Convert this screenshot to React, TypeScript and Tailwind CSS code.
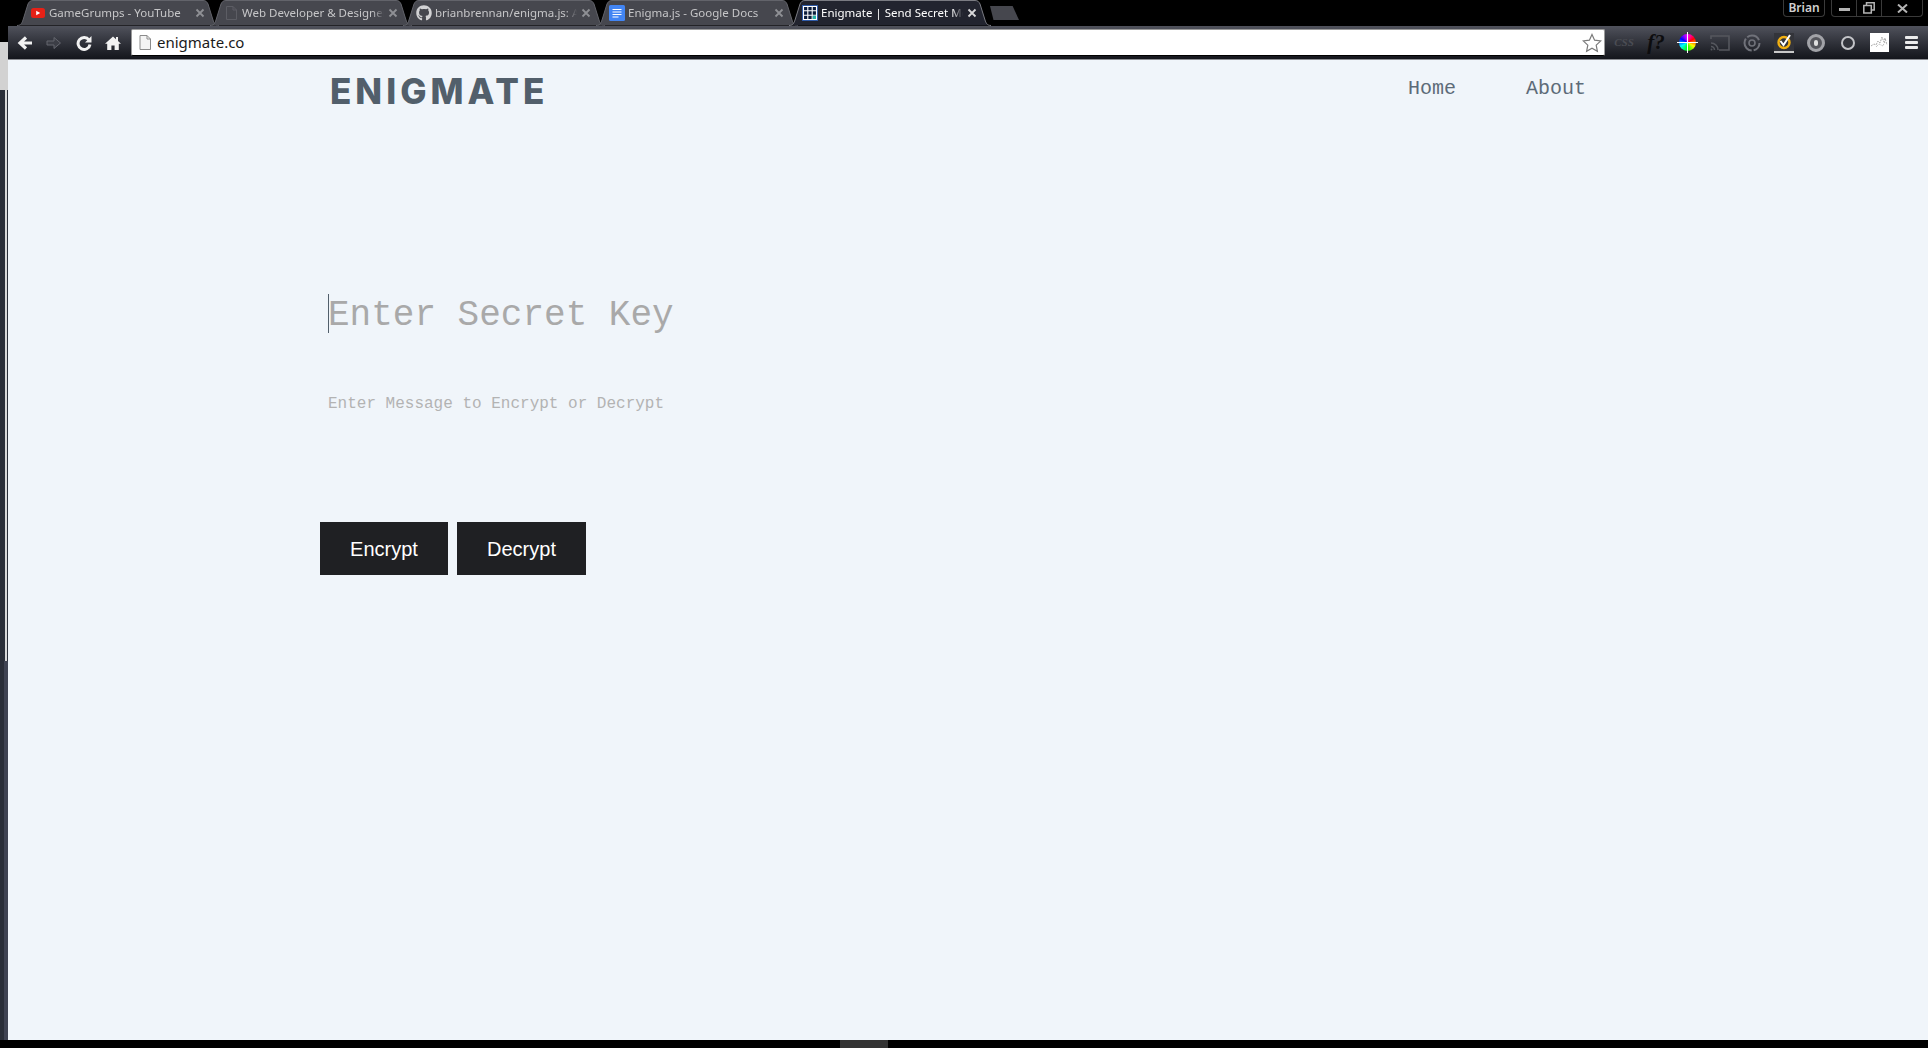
import { FaGithub } from "react-icons/fa";

const tabs = [
  { title: "GameGrumps - YouTube", icon: "youtube" },
  { title: "Web Developer & Designer", icon: "page" },
  { title: "brianbrennan/enigma.js: A", icon: "github" },
  { title: "Enigma.js - Google Docs", icon: "docs" },
  { title: "Enigmate | Send Secret Messages", icon: "grid", active: true },
];

function TabIcon({ name }: { name: string }) {
  if (name === "youtube") {
    return (
      <svg width="16" height="16" viewBox="0 0 16 16">
        <rect x="1" y="3" width="14" height="10" rx="2.5" fill="#e62117" />
        <path d="M6.2 5.8 L10.2 8 L6.2 10.2 Z" fill="#fff" />
      </svg>
    );
  }
  if (name === "page") {
    return (
      <svg width="16" height="16" viewBox="0 0 16 16" fill="none" stroke="#5c5d64">
        <path d="M3.5 1.5 H10 L13.5 5 V14.5 H3.5 Z M10 1.5 V5 H13.5" />
      </svg>
    );
  }
  if (name === "github") return <FaGithub className="text-[#d2d2d4] text-[16px]" />;
  if (name === "docs") {
    return (
      <svg width="16" height="16" viewBox="0 0 16 16">
        <rect width="16" height="16" rx="1.5" fill="#4285f4" />
        <path d="M3.5 4.5 H12.5 M3.5 7 H12.5 M3.5 9.5 H12.5 M3.5 12 H9.5" stroke="#fff" strokeWidth="1.2" />
      </svg>
    );
  }
  return (
    <svg width="16" height="16" viewBox="0 0 16 16">
      <rect width="16" height="16" fill="#2f5aa8" />
      <path d="M1.5 1.5 H14.5 V14.5 H1.5 Z M5.8 1.5 V14.5 M10.2 1.5 V14.5 M1.5 5.8 H14.5 M1.5 10.2 H14.5" fill="#0b1b3a" stroke="#fff" strokeWidth="1.1" />
      <rect x="10.8" y="10.8" width="3.2" height="3.2" fill="#22b3a6" />
    </svg>
  );
}

function Tab({ title, icon, active }: { title: string; icon: string; active?: boolean }) {
  return (
    <div className="relative w-[202px] h-[26px] -mr-[9px] shrink-0 flex items-center pl-[13px]">
      <svg className="absolute inset-0" width="202" height="26" viewBox="0 0 202 26">
        <path
          d="M0 25.5 C4 25.5 5 23 6 20 L11 4 C12 2 13 0.5 16 0.5 L186 0.5 C189 0.5 190 2 191 4 L196 20 C197 23 198 25.5 202 25.5"
          fill={active ? "#22242f" : "#46474e"}
          stroke={active ? "#7a7b82" : "#62636a"}
        />
      </svg>
      <div className="relative w-[16px] h-[16px] flex items-center justify-center">
        <TabIcon name={icon} />
      </div>
      <span
        className={`relative ml-[3px] w-[142px] overflow-hidden whitespace-nowrap text-[11.5px] font-['Noto_Sans',sans-serif] [mask-image:linear-gradient(to_right,#000_92%,transparent)] ${
          active ? "text-white" : "text-[#c6c6c8]"
        }`}
      >
        {title}
      </span>
      <svg className="relative ml-[4px]" width="10" height="10" viewBox="0 0 10 10">
        <path d="M1.5 1.5 L8.5 8.5 M8.5 1.5 L1.5 8.5" stroke={active ? "#d8d8da" : "#8f9095"} strokeWidth="1.8" />
      </svg>
    </div>
  );
}

function WindowControls() {
  return (
    <div className="ml-auto flex items-start gap-[6px] pr-[5px] self-start">
      <div className="w-[42px] h-[17px] border border-t-0 border-[#3a3a3a] rounded-b-[4px] flex items-center justify-center text-[12px] font-semibold text-[#d0d0d0] font-['Noto_Sans',sans-serif]">
        Brian
      </div>
      <div className="w-[92px] h-[17px] border border-t-0 border-[#3a3a3a] rounded-b-[4px] flex">
        <div className="w-[25px] flex items-center justify-center border-r border-[#3a3a3a]">
          <div className="w-[11px] h-[3px] bg-[#b4b4b4] mt-[2px]" />
        </div>
        <div className="w-[25px] flex items-center justify-center border-r border-[#3a3a3a]">
          <svg width="12" height="12" viewBox="0 0 12 12" fill="none" stroke="#b4b4b4" strokeWidth="1.5">
            <path d="M3.5 3 V0.8 H11.2 V8 H8.5" />
            <rect x="0.8" y="3.5" width="7.5" height="7.5" />
          </svg>
        </div>
        <div className="flex-1 flex items-center justify-center">
          <svg width="11" height="9" viewBox="0 0 11 9">
            <path d="M1 0.5 L10 8.5 M10 0.5 L1 8.5" stroke="#b4b4b4" strokeWidth="2" />
          </svg>
        </div>
      </div>
    </div>
  );
}

function NavIcons() {
  return (
    <div className="flex items-center gap-[11px] pl-[8px]">
      <svg width="18" height="18" viewBox="0 0 18 18">
        <path d="M16 9 H5.5 M10 3.5 L4 9 L10 14.5" fill="none" stroke="#f2f2f2" strokeWidth="3.2" />
      </svg>
      <svg width="18" height="18" viewBox="0 0 18 18">
        <path d="M2 7 H9 V3.5 L15.5 9 L9 14.5 V11 H2 Z" fill="#3c3e46" stroke="#65676f" strokeWidth="1" />
      </svg>
      <svg className="ml-[2px]" width="16" height="16" viewBox="0 0 16 16" fill="none">
        <path d="M13 5 A6 6 0 1 0 14 9.5" stroke="#f2f2f2" strokeWidth="3" />
        <path d="M15.5 1 V7.5 H9 Z" fill="#f2f2f2" />
      </svg>
      <svg className="ml-[2px]" width="16" height="16" viewBox="0 0 16 16">
        <path d="M8 1.5 L11 4.2 V2 H13 V6 L16 8.7 H13.8 V15 H9.6 V10.5 H6.4 V15 H2.2 V8.7 H0 Z" fill="#f2f2f2" />
      </svg>
    </div>
  );
}

function ExtensionIcons() {
  return (
    <div className="flex items-center h-full text-[0px] shrink-0">
      <span className="w-[32px] ml-[3px] text-center text-[11px] font-bold italic text-[#4b4d54] font-['Liberation_Serif',serif]">CSS</span>
      <span className="w-[32px] text-center text-[21px] italic font-bold text-[#0c0c0e] font-['Liberation_Serif',serif]">f?</span>
      <div className="w-[31px] flex justify-center">
        <div className="relative w-[17px] h-[17px] rounded-full bg-[conic-gradient(#f0f,#f00,#ff0,#0f0,#0ff,#00f,#f0f)]">
          <div className="absolute left-[8px] -top-[2px] w-[1px] h-[21px] bg-white" />
          <div className="absolute top-[8px] -left-[2px] h-[1px] w-[21px] bg-white" />
        </div>
      </div>
      <div className="w-[33px] flex justify-center">
        <svg width="20" height="16" viewBox="0 0 20 16" fill="none" stroke="#55575e" strokeWidth="1.6">
          <path d="M1 4 V1 H19 V15 H9" />
          <path d="M1 8 A7 7 0 0 1 8 15 M1 11.5 A3.5 3.5 0 0 1 4.5 15" />
          <circle cx="1.5" cy="14.5" r="1" fill="#55575e" stroke="none" />
        </svg>
      </div>
      <div className="w-[32px] flex justify-center">
        <svg width="18" height="20" viewBox="0 0 18 20" fill="none" stroke="#70727a" strokeWidth="2">
          <circle cx="9" cy="10" r="7.5" strokeDasharray="10 2 16 2 14 3" />
          <circle cx="9" cy="10" r="3" strokeWidth="1.6" />
        </svg>
      </div>
      <div className="w-[31px] flex justify-center">
        <svg width="20" height="20" viewBox="0 0 20 20">
          <rect width="20" height="18" fill="#33343a" />
          <rect y="18" width="20" height="2" fill="#c9c9c9" />
          <circle cx="10" cy="9.5" r="5.5" fill="none" stroke="#f2b011" strokeWidth="2.4" />
          <path d="M6.5 8 L9.5 12 L16 2" fill="none" stroke="#fff" strokeWidth="2" />
        </svg>
      </div>
      <div className="w-[33px] flex justify-center">
        <div className="w-[18px] h-[18px] rounded-full border-[3px] border-[#a2a3a8] bg-[#55565c] flex items-center justify-center">
          <div className="w-[4px] h-[6px] rounded-full bg-[#e0e0e0]" />
        </div>
      </div>
      <div className="w-[31px] flex justify-center">
        <div className="w-[14px] h-[14px] rounded-full border-[2px] border-[#c3c4c8] bg-[#33353c]" />
      </div>
      <div className="w-[32px] flex justify-center">
        <svg className="bg-white" width="19" height="19" viewBox="0 0 19 19" fill="none" stroke="#a8a8a8">
          <path d="M1 13 L4 11 L6 12 L8 8 L10 10 L12 4 L14 9 L15 5 L17 12" strokeDasharray="2 1" />
          <path d="M6 14 L9 11 L13 13 L15 8" strokeDasharray="1 1" />
        </svg>
      </div>
      <div className="w-[32px] flex flex-col items-center gap-[2px]">
        <div className="w-[13px] h-[3px] bg-[#ececec] rounded-[1px]" />
        <div className="w-[13px] h-[3px] bg-[#ececec] rounded-[1px]" />
        <div className="w-[13px] h-[3px] bg-[#ececec] rounded-[1px]" />
      </div>
    </div>
  );
}

function BrowserChrome() {
  return (
    <div className="shrink-0">
      <div className="h-[26px] bg-black flex pl-[9px]">
        {tabs.map((t) => (
          <Tab key={t.title} title={t.title} icon={t.icon} active={t.active} />
        ))}
        <div className="ml-[8px] mt-[6px] w-[29px] h-[14px] bg-[#46474e] [clip-path:polygon(0_0,78%_0,100%_100%,12%_100%)]" />
        <WindowControls />
      </div>
      <div className="h-[34px] flex items-center bg-gradient-to-b from-[#50525c] to-[#14161c] border-b border-[#8b8d92]">
        <NavIcons />
        <div className="ml-[10px] w-[1474px] shrink-0 h-[27px] bg-white rounded-[2px] border border-[#9a9a9a] border-b-black flex items-center pl-[7px] pr-[2px]">
          <svg width="12" height="15" viewBox="0 0 12 15" fill="#f4f4f4" stroke="#8b8b8b">
            <path d="M1 0.5 H8 L11.5 4 V14.5 H1 Z M8 0.5 V4 H11.5" />
          </svg>
          <span className="ml-[6px] text-[15px] text-[#1a1a1a] font-['Noto_Sans',sans-serif]">enigmate.co</span>
          <svg className="ml-auto" width="20" height="20" viewBox="0 0 20 20" fill="none" stroke="#7a7a7a" strokeWidth="1.2">
            <path d="M10 1.5 L12.6 7.2 L18.8 7.9 L14.2 12.1 L15.4 18.3 L10 15.2 L4.6 18.3 L5.8 12.1 L1.2 7.9 L7.4 7.2 Z" />
          </svg>
        </div>
        <ExtensionIcons />
      </div>
    </div>
  );
}

function LeftStrip() {
  return (
    <div className="w-[8px] shrink-0 flex flex-col bg-black">
      <div className="h-[42px]" />
      <div className="h-[48px] bg-[#d2d2d2]" />
      <div className="h-[571px] bg-[#2a2e38] flex">
        <div className="w-[5px]" />
        <div className="w-[2px] bg-[#d8d8d8]" />
      </div>
      <div className="flex-1 flex">
        <div className="w-[4px] bg-[#2a2e38]" />
        <div className="flex-1 bg-[#3f4352]" />
      </div>
    </div>
  );
}

export default function App() {
  return (
    <div className="w-[1928px] h-[1048px] overflow-hidden flex flex-col bg-black">
      <div className="flex-1 flex min-h-0">
        <LeftStrip />
        <div className="flex-1 flex flex-col min-w-0">
          <BrowserChrome />
          <main className="flex-1 bg-[#f0f5fa] pl-[312px] pr-[342px]">
            <header className="flex justify-between pl-[10px] pt-[8px]">
              <a className="text-[35px] leading-[46px] font-extrabold tracking-[4px] text-[#525f6b] font-['Inter',sans-serif]">ENIGMATE</a>
              <nav className="flex gap-[70px] pt-[9px] text-[20px] leading-[24px] text-[#5d6b78] font-['Liberation_Mono',monospace]">
                <a>Home</a>
                <a>About</a>
              </nav>
            </header>
            <div className="relative mt-[182px] ml-[8px]">
              <span className="absolute left-0 -top-[2px] w-[1px] h-[39px] bg-[#525f6b]" />
              <input
                className="w-[800px] h-[40px] bg-transparent outline-none text-[36px] font-['Liberation_Mono',monospace] placeholder:text-[#a9a9a9]"
                placeholder="Enter Secret Key"
              />
            </div>
            <textarea
              className="block mt-[56px] ml-[8px] w-[800px] h-[110px] resize-none bg-transparent outline-none text-[16px] leading-[24px] font-['Liberation_Mono',monospace] placeholder:text-[#b3b3b3]"
              placeholder="Enter Message to Encrypt or Decrypt"
            />
            <div className="mt-[20px] flex gap-[9px]">
              <button className="w-[128px] h-[53px] bg-[#1f2023] text-white text-[20px] font-['Liberation_Sans',sans-serif]">Encrypt</button>
              <button className="w-[129px] h-[53px] bg-[#1f2023] text-white text-[20px] font-['Liberation_Sans',sans-serif]">Decrypt</button>
            </div>
          </main>
        </div>
      </div>
      <div className="h-[8px] shrink-0 bg-black pl-[840px]">
        <div className="w-[48px] h-full bg-[#333333]" />
      </div>
    </div>
  );
}
